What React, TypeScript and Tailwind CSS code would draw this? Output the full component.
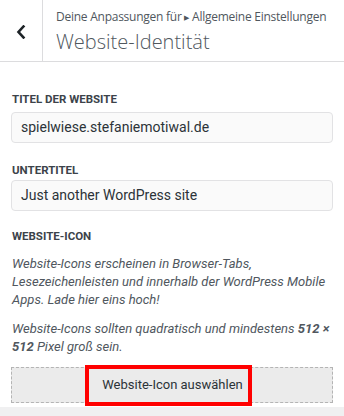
import React from 'react';

const Label: React.FC<{ children: React.ReactNode; className?: string }> = ({ children, className = '' }) => (
  <div className={`text-[11.5px] leading-4 font-bold uppercase text-[#3c434a] ${className}`}>{children}</div>
);

const TextInput: React.FC<{ value: string; className?: string }> = ({ value, className = '' }) => (
  <div
    className={`h-[31px] rounded-[4px] border border-[#e2e2e4] bg-[#fafafa] px-[9px] flex items-center text-[14px] text-[#2c3338] ${className}`}
  >
    {value}
  </div>
);

export default function App() {
  return (
    <div className="w-[344px] h-[416px] bg-white overflow-hidden flex flex-col font-['Roboto',Arial,sans-serif]">
      {/* Header */}
      <div className="flex h-[62px] border-b border-[#dcdcde] shrink-0">
        <button className="w-[43px] border-r border-[#dcdcde] flex items-center justify-center pt-[2px]">
          <svg width="10" height="14" viewBox="0 0 10 14" fill="none">
            <path d="M7.5 1.5L2.5 7l5 5.5" stroke="#1d2327" strokeWidth="2.6" strokeLinecap="square" />
          </svg>
        </button>
        <div className="pl-[13px] pt-[8px] font-['Open_Sans',sans-serif] text-[#50575e] whitespace-nowrap">
          <div className="text-[12px] leading-[18px] tracking-[-0.25px]">
            Deine Anpassungen für <span className="text-[7px] relative -top-[1px]">▶</span> Allgemeine Einstellungen
          </div>
          <div className="text-[20px] leading-[26px] font-light mt-[1px]">Website-Identität</div>
        </div>
      </div>

      {/* Content */}
      <div className="flex-1 px-[11px] pt-[29px]">
        <Label className="pl-[1px]">Titel der Website</Label>
        <TextInput value="spielwiese.stefaniemotiwal.de" className="mt-[5px]" />

        <Label className="pl-[1px] mt-[19px]">Untertitel</Label>
        <TextInput value="Just another WordPress site" className="mt-[2px]" />

        <Label className="pl-[1px] mt-[17px]">Website-Icon</Label>
        <div className="pl-[1px] text-[13px] leading-[18px] italic text-[#50575e] whitespace-nowrap">
          <p className="mt-[11px]">
            Website-Icons erscheinen in Browser-Tabs,
            <br />
            Lesezeichenleisten und innerhalb der WordPress Mobile
            <br />
            Apps. Lade hier eins hoch!
          </p>
          <p className="mt-[11px]">
            Website-Icons sollten quadratisch und mindestens <strong>512 ×</strong>
            <br />
            <strong>512</strong> Pixel groß sein.
          </p>
        </div>

        <div className="relative mt-[11px] h-[36px] border border-dashed border-[#b4b4b4] bg-[#ebebeb] flex items-center justify-center">
          <span className="text-[13px] text-[#2c3338] pl-[1px]">Website-Icon auswählen</span>
          <div className="absolute left-[73px] top-[-3px] w-[167px] h-[41px] border-4 border-[#ff0000]" />
        </div>
      </div>

      <div className="h-[9px] bg-[#f0f0f1] shrink-0" />
    </div>
  );
}
